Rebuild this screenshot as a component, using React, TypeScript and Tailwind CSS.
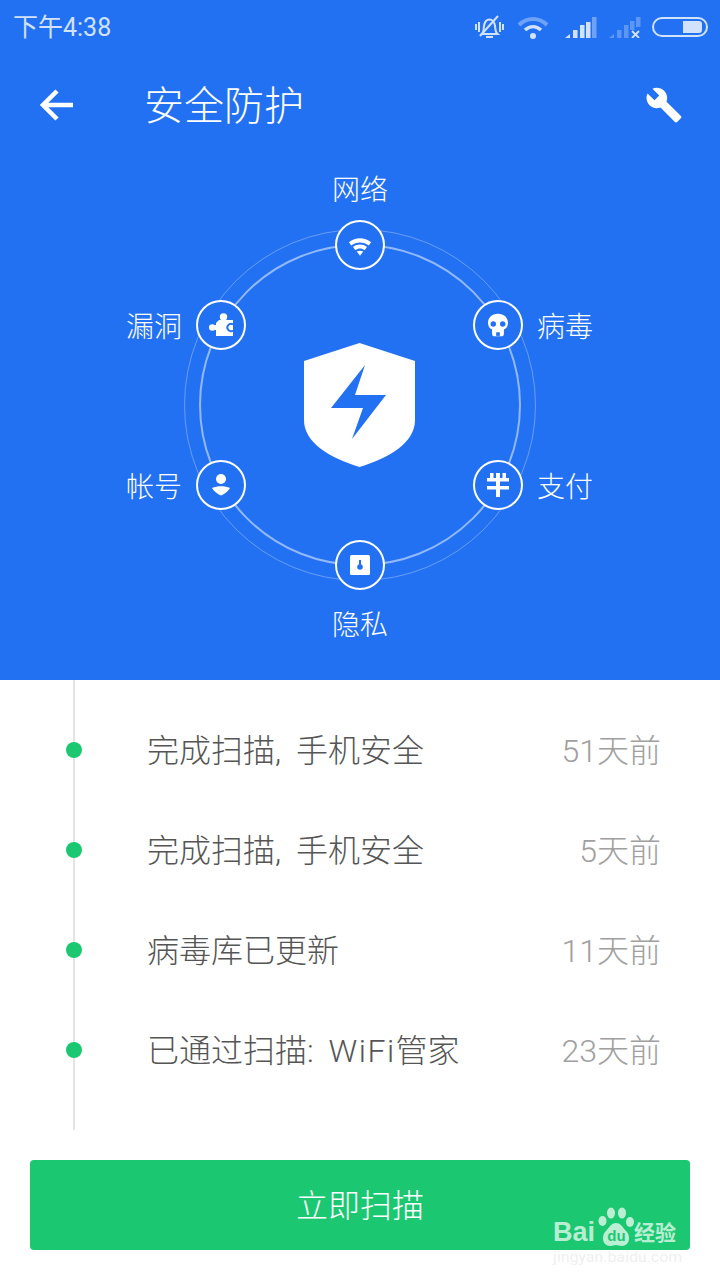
import { ReactNode } from "react";

const font = { fontFamily: 'Roboto, "Noto Sans CJK SC", sans-serif' };

const records: { text: ReactNode; time: string }[] = [
  { text: "完成扫描, 手机安全", time: "51天前" },
  { text: "完成扫描, 手机安全", time: "5天前" },
  { text: "病毒库已更新", time: "11天前" },
  {
    text: (
      <>
        已通过扫描: <span className="tracking-[1.5px]">WiFi</span>管家
      </>
    ),
    time: "23天前",
  },
];

function MuteIcon() {
  return (
    <svg width="29" height="24" viewBox="0 0 29 24" fill="none" stroke="#d3e2fc" strokeWidth="2">
      <path d="M7 19c2-2 1.500-5 2-8 .6-4 3-6.500 5.500-6.500S19.500 7 20 11c.5 3 0 6 2.500 8z" />
      <path d="M11 22h7" />
      <path d="M5 21 23 1" />
      <path d="M1 9v6M4 7v10M25 7v10M28 9v6" />
    </svg>
  );
}

function WifiStatusIcon() {
  return (
    <svg width="32" height="23" viewBox="0 0 32 23" fill="none">
      <path d="M2 9c8-8 20-8 28 0" stroke="#6ea2f8" strokeWidth="4" />
      <path d="M8 14c5-4.500 11-4.500 16 0" stroke="#d3e2fc" strokeWidth="3.500" />
      <circle cx="16" cy="20" r="3" fill="#d3e2fc" />
    </svg>
  );
}

function SignalIcon({ dim }: { dim?: boolean }) {
  const on = dim ? "#5c96f7" : "#d3e2fc";
  const off = dim ? "#5c96f7" : "#6ea2f8";
  return (
    <svg width="32" height="21" viewBox="0 0 32 21">
      <path d="M0 21 5 17v4z" fill={on} />
      <rect x="8" y="13" width="4.500" height="8" fill={on} />
      <rect x="15" y="8" width="4.500" height="13" fill={on} />
      <rect x="21" y={dim ? 4 : 5} width="4.500" height={dim ? 9 : 16} fill={on} />
      <rect x="27" y="0" width="4.500" height={dim ? 10 : 21} fill={off} />
      {dim && <path d="M23 14l7 7M30 14l-7 7" stroke="#d3e2fc" strokeWidth="1.800" />}
    </svg>
  );
}

function BatteryIcon() {
  return (
    <div className="flex h-[20px] w-[56px] items-center justify-end rounded-full border-2 border-[#d3e2fc] pr-[4px]">
      <div className="h-[12px] w-[19px] rounded-r-[3px] bg-[#d3e2fc]" />
    </div>
  );
}

function WifiIcon() {
  return (
    <svg className="mt-[3px]" width="24" height="19" viewBox="0 0 26 20" fill="white">
      <path d="M1 5.500C8-.5 18-.5 25 5.500l-2.500 3.500C17 4.500 9 4.500 3.500 9z" />
      <path d="M5.500 10.500C10 7 16 7 20.500 10.500L18 14c-3-2.300-7-2.300-10 0z" />
      <path d="M9.500 15.500c2-1.200 5-1.200 7 0L13 20z" />
    </svg>
  );
}

function PuzzleIcon() {
  return (
    <svg className="mr-[1px]" width="24" height="24" viewBox="0 0 24 24" fill="white">
      <circle cx="14.500" cy="4" r="3.700" />
      <circle cx="3.300" cy="14.500" r="3.300" />
      <path d="M6 12h3v5H6z" />
      <path d="M7 10 10 7h14v16H7z" />
      <path d="M24 11.500a3.600 3.600 0 1 0 0 6" fill="none" stroke="#2371f3" strokeWidth="2" />
    </svg>
  );
}

function SkullIcon() {
  return (
    <svg width="20" height="24" viewBox="0 0 22 25">
      <path
        d="M11 0C4.500 0 0 4.300 0 10c0 3.500 1.500 6.200 4.500 7.500V22c0 1.500 1 3 2.500 3h8c1.500 0 2.500-1.500 2.500-3v-4.500C20.500 16.200 22 13.500 22 10 22 4.300 17.500 0 11 0z"
        fill="white"
      />
      <circle cx="5.800" cy="11.500" r="3" fill="#2371f3" />
      <circle cx="16.200" cy="11.500" r="3" fill="#2371f3" />
      <path d="M9 20.500h4v4H9z" fill="#2371f3" />
    </svg>
  );
}

function PersonIcon() {
  return (
    <svg width="20" height="24" viewBox="0 0 20 24" fill="white">
      <circle cx="10" cy="6" r="5" />
      <path d="M1 15c5-2.500 13-2.500 18 0-2 3.500-5.500 6-9 7.500-3.500-1.500-7-4-9-7.500z" />
    </svg>
  );
}

function PayIcon() {
  return (
    <svg width="22" height="24" viewBox="0 0 22 24" fill="white">
      <path d="M3 0h3.500v5H3zM15.500 0H19v5h-3.500z" />
      <path d="M0 5h22v3.500H0zM0 13h22v3.500H0z" />
      <path d="M9 0h4v24H9z" />
    </svg>
  );
}

function LockIcon() {
  return (
    <svg width="20" height="20" viewBox="0 0 20 20">
      <rect width="20" height="20" rx="1.500" fill="white" />
      <circle cx="10" cy="12" r="2.800" fill="#2371f3" />
      <rect x="9" y="5" width="2" height="6" fill="#2371f3" />
    </svg>
  );
}

function Node({ className, children }: { className: string; children: ReactNode }) {
  return (
    <div
      className={`absolute flex h-[50px] w-[50px] items-center justify-center rounded-full border-2 border-white bg-[#2371f3] ${className}`}
    >
      {children}
    </div>
  );
}

function Label({ className, children }: { className: string; children: ReactNode }) {
  return <div className={`absolute text-[28px] font-light leading-[40px] text-white ${className}`}>{children}</div>;
}

function Diagram() {
  return (
    <div className="relative h-[526px] w-full">
      <div className="absolute left-[184px] top-[75px] h-[352px] w-[352px] rounded-full border border-white/30" />
      <div className="absolute left-[199px] top-[90px] h-[322px] w-[322px] rounded-full border-2 border-white/50" />

      <Node className="left-[335px] top-[66px]"><WifiIcon /></Node>
      <Node className="left-[196px] top-[146px]"><PuzzleIcon /></Node>
      <Node className="left-[473px] top-[146px]"><SkullIcon /></Node>
      <Node className="left-[196px] top-[306px]"><PersonIcon /></Node>
      <Node className="left-[473px] top-[306px]"><PayIcon /></Node>
      <Node className="left-[335px] top-[386px]"><LockIcon /></Node>

      <Label className="left-[332px] top-[17px]">网络</Label>
      <Label className="left-[126px] top-[154px]">漏洞</Label>
      <Label className="left-[537px] top-[154px]">病毒</Label>
      <Label className="left-[126px] top-[314px]">帐号</Label>
      <Label className="left-[537px] top-[314px]">支付</Label>
      <Label className="left-[332px] top-[452px]">隐私</Label>

      <svg className="absolute left-[304px] top-[189px]" width="111" height="124" viewBox="0 0 111 124">
        <path d="M55.500 0 111 18v59c0 23-26 38-55.500 47C26 115 0 100 0 77V18z" fill="white" />
        <path d="M61 22 27 65h32L48 96l34-44H51z" fill="#2371f3" />
      </svg>
    </div>
  );
}

function Watermark() {
  return (
    <div className="absolute left-[553px] top-[1203px] w-[130px] text-white/70">
      <div className="flex h-[45px] items-end">
        <span className="text-[27px] font-bold leading-[32px]" style={{ fontFamily: '"Liberation Sans", sans-serif' }}>
          Bai
        </span>
        <svg className="ml-[3px]" width="37" height="41" viewBox="0 0 37 41" fill="currentColor">
          <ellipse cx="4.500" cy="14" rx="4" ry="5" />
          <ellipse cx="13" cy="6" rx="4" ry="5.500" />
          <ellipse cx="24" cy="6" rx="4" ry="5.500" />
          <ellipse cx="32" cy="15" rx="4" ry="5" />
          <path d="M18 16c5 0 7 5 11 9 4 5 2 14-5 14-3 0-4-1-6-1s-3 1-6 1c-7 0-9-9-5-14 4-4 6-9 11-9z" />
          <text x="18.500" y="34" textAnchor="middle" fontSize="15" fontWeight="700" fill="#1bc871" fontFamily="Liberation Sans">
            du
          </text>
        </svg>
        <span className="ml-[-1px] text-[21px] font-bold leading-[30px]">经验</span>
      </div>
      <div className="mt-[1px] text-[15.500px] leading-[16px] tracking-[0.2px] text-[#efefef]">jingyan.baidu.com</div>
    </div>
  );
}

export default function App() {
  return (
    <div className="relative h-[1280px] w-[720px] overflow-hidden bg-white" style={font}>
      <header className="h-[680px] bg-[#2371f3]">
        <div className="flex h-[54px] items-center pl-[13px] pr-[12px]">
          <span className="pt-[2px] text-[25px] text-[#d3e2fc]">下午4:38</span>
          <div className="ml-auto flex items-center">
            <MuteIcon />
            <div className="ml-[13px]"><WifiStatusIcon /></div>
            <div className="ml-[16px]"><SignalIcon /></div>
            <div className="ml-[12px]"><SignalIcon dim /></div>
            <div className="ml-[11px]"><BatteryIcon /></div>
          </div>
        </div>
        <div className="flex h-[100px] items-center pl-[40px] pr-[37px] pt-[2px]">
          <svg width="33" height="32" viewBox="0 0 33 32" fill="none" stroke="white" strokeWidth="4.500">
            <path d="M33 16H4M17 2 3 16l14 14" />
          </svg>
          <h1 className="ml-[71px] pt-[4px] text-[40px] font-light leading-none text-white">安全防护</h1>
          <svg className="ml-auto" width="38" height="38" viewBox="0 0 24 24" fill="white">
            <path d="M22.700 19l-9.100-9.100c.9-2.300.4-5-1.500-6.900-2-2-5-2.400-7.400-1.300L9 6 6 9 1.600 4.700C.4 7.100.9 10.100 2.900 12.100c1.900 1.900 4.600 2.400 6.900 1.500l9.100 9.100c.4.4 1 .4 1.400 0l2.300-2.300c.5-.4.500-1.100.1-1.400z" />
          </svg>
        </div>
        <Diagram />
      </header>

      <section className="relative flex h-[450px] flex-col pt-[20px]">
        <div className="absolute bottom-0 left-[73px] top-0 w-[2px] bg-[#e4e4e4]" />
        {records.map((record, index) => (
          <div key={index} className="relative flex h-[100px] items-center pl-[66px] pr-[59px]">
            <div className="h-[16px] w-[16px] rounded-full bg-[#1bc871]" />
            <div className="ml-[65px] pt-[2px] text-[32px] font-light text-[#555555] [word-spacing:7px]">{record.text}</div>
            <div className="ml-auto pt-[2px] text-[32px] font-light text-[#a0a0a0]">{record.time}</div>
          </div>
        ))}
      </section>

      <div className="px-[30px] pt-[30px]">
        <button className="h-[90px] w-full rounded-[4px] bg-[#1bc871] pt-[2px] text-[32px] font-light text-white">
          立即扫描
        </button>
      </div>

      <Watermark />
    </div>
  );
}
